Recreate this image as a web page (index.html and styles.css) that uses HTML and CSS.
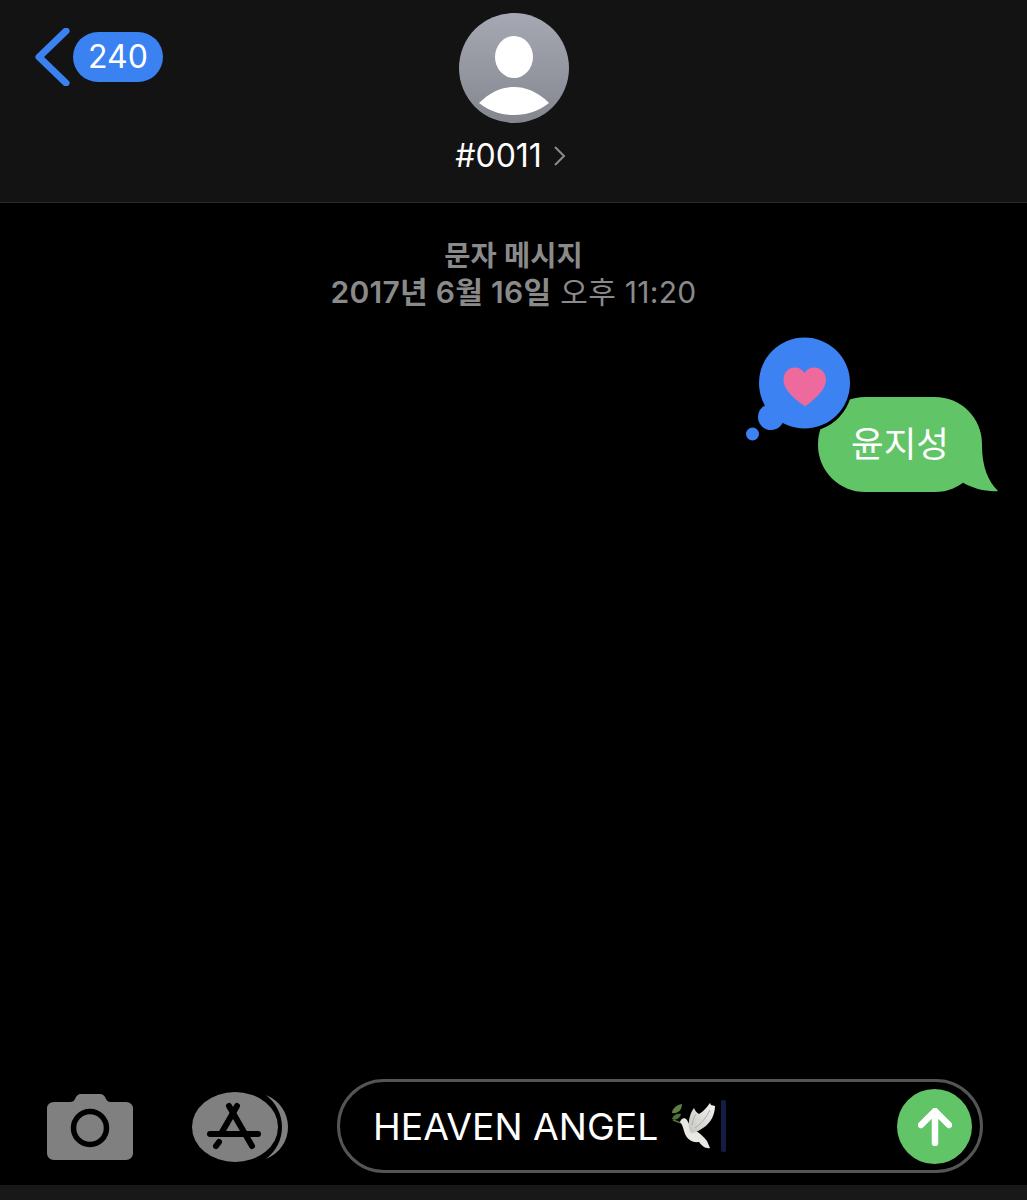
FILE: index.html
```html
<!DOCTYPE html>
<html>
  <head>
    <meta charset="UTF-8">
    <meta name="viewport" content="width=device-width, initial-scale=1.0">
    <title>#0011</title>
    <link rel="stylesheet" href="styles.css">
  </head>
  <body>
    <div class="screen">
      <header class="top-bar">
        <div class="back">
          <svg class="back-chevron" width="36" height="58" viewBox="0 0 36 58">
            <path d="M31 3 L4 29 L31 55" fill="none" stroke="#3a82f2" stroke-width="7" stroke-linecap="round" stroke-linejoin="round"/>
          </svg>
          <span class="back-count">240</span>
        </div>
        <div class="contact">
          <svg class="avatar" width="110" height="110" viewBox="0 0 110 110">
            <defs>
              <linearGradient id="avatar-fill" x1="0" y1="0" x2="0" y2="1">
                <stop offset="0" stop-color="#a6a9b3"/>
                <stop offset="1" stop-color="#84878e"/>
              </linearGradient>
            </defs>
            <circle cx="55" cy="55" r="55" fill="url(#avatar-fill)"/>
            <ellipse cx="55" cy="44" rx="19" ry="21" fill="#fff"/>
            <path d="M20 90 C32 78 44 74 55 74 C66 74 78 78 90 90 C80 98 68 102 55 102 C42 102 30 98 20 90 Z" fill="#fff"/>
          </svg>
          <div class="contact-name">
            <span>#0011</span>
            <svg width="13" height="22" viewBox="0 0 13 22">
              <path d="M2 2 L11 11 L2 20" fill="none" stroke="#8c8c8c" stroke-width="2"/>
            </svg>
          </div>
        </div>
      </header>

      <main class="thread">
        <div class="stamp">
          <div class="stamp-kind">문자 메시지</div>
          <div class="stamp-date"><b>2017년 6월 16일</b> 오후 11:20</div>
        </div>
        <div class="message">
          <svg class="tapback" width="108" height="108" viewBox="0 0 108 108">
            <circle cx="59.5" cy="47" r="48" fill="#000"/>
            <circle cx="59.5" cy="46" r="45.5" fill="#3d82f3"/>
            <circle cx="26" cy="80" r="13" fill="#3d82f3"/>
            <circle cx="7.5" cy="97" r="6.5" fill="#3d82f3"/>
            <path d="M59.5 69 C47 60 38.5 52 38.5 42.5 C38.5 35 44 30.5 50 30.5 C54 30.5 57.5 32.5 59.5 36 C61.5 32.5 65 30.5 69 30.5 C75 30.5 81 35 81 42.5 C81 52 72 60 62 68 C61 69 60 69 59.5 69 Z" fill="#ee6a9c"/>
          </svg>
          <div class="bubble">
            윤지성
            <svg class="bubble-tail" width="40" height="47" viewBox="0 0 40 47">
              <path d="M0 10 L24 0 C24 22 30 36 40 46 C30 47 15 44 4 37 Z" fill="#61c467"/>
            </svg>
          </div>
        </div>
      </main>

      <footer class="composer">
        <svg class="tool" width="86" height="66" viewBox="0 0 86 66">
          <path d="M7 8 H23 C26 8 27 7 28 5 C29 2 31 0 34 0 H53 C56 0 58 2 59 5 C60 7 61 8 64 8 H79 C83 8 86 11 86 14 V59 C86 63 83 66 79 66 H7 C3 66 0 63 0 59 V14 C0 11 3 8 7 8 Z" fill="#808080"/>
          <circle cx="43" cy="34" r="16.5" fill="none" stroke="#000" stroke-width="5.5"/>
        </svg>
        <svg class="tool tool-apps" width="98" height="72" viewBox="0 0 98 72">
          <path d="M74 4 C88 10 96 22 96 36 C96 50 88 62 74 68 C84 60 90 49 90 36 C90 23 84 12 74 4 Z" fill="#808080"/>
          <ellipse cx="43" cy="36" rx="43" ry="35" fill="#808080"/>
          <g fill="none" stroke="#000" stroke-width="6" stroke-linecap="round">
            <path d="M45 15 L30 41"/>
            <path d="M37 15 L60 55"/>
            <path d="M18 43 H66"/>
            <path d="M24 55 L27 51"/>
          </g>
        </svg>
        <div class="field">
          <span class="field-text">HEAVEN ANGEL</span>
          <svg class="dove" width="48" height="50" viewBox="0 0 48 50">
            <defs>
              <linearGradient id="dove-wing" x1="1" y1="0" x2="0" y2="1">
                <stop offset="0" stop-color="#f4f4f2"/>
                <stop offset="1" stop-color="#c4c4c1"/>
              </linearGradient>
            </defs>
            <!-- olive sprig -->
            <path d="M3 19 L11 22" stroke="#56723a" stroke-width="1.5"/>
            <path d="M2 12 C2 8 6 4 12 3 C12 8 9 13 2 12 Z" fill="#5f8040"/>
            <path d="M2 18 C3 14 7 12 11 13 C10 17 6 20 2 18 Z" fill="#4f6f36"/>
            <!-- body and tail -->
            <path d="M10 21 C11 17 15 16 17 19 C19 23 21 27 26 30 C31 33 34 36 37 40 L40 47 C36 48 32 45 29 41 C22 42 16 38 14 30 C13 26 12 23 10 21 Z" fill="#e8e8e5"/>
            <!-- wings -->
            <path d="M19 28 C18 20 20 12 24 7 C25 10 27 12 29 13 C33 11 37 6 40 2 L41 4 L45 5 C45 13 41 22 33 27 C29 30 24 32 21 32 Z" fill="url(#dove-wing)"/>
            <path d="M25 27 C31 23 36 17 40 9 M22 24 C23 19 24 16 26 13" fill="none" stroke="#aeaeaa" stroke-width="1"/>
          </svg>
          <span class="caret"></span>
          <button class="send" type="button">
            <svg width="34" height="38" viewBox="0 0 34 38">
              <path d="M3 17 L17 3 L31 17 M17 3 V35" fill="none" stroke="#fff" stroke-width="6.5" stroke-linecap="round" stroke-linejoin="round"/>
            </svg>
          </button>
        </div>
      </footer>
      <div class="keyboard-edge"></div>
    </div>
  </body>
</html>
```

FILE: styles.css
```css
* {
  margin: 0;
  padding: 0;
  box-sizing: border-box;
}

body {
  background: #000;
  font-family: Inter, "Noto Sans CJK KR", sans-serif;
  color: #fff;
}

.screen {
  height: 1200px;
  display: flex;
  flex-direction: column;
  overflow: hidden;
}

.top-bar {
  height: 203px;
  flex: none;
  display: grid;
  grid-template-columns: 1fr 110px 1fr;
  padding-top: 13px;
  background: #131313;
  border-bottom: 1px solid #2b2b2b;
}

.back {
  grid-column: 1;
  display: flex;
  align-items: center;
  align-self: start;
  gap: 2px;
  margin-top: 15px;
  padding-left: 35px;
}

.back-count {
  width: 90px;
  height: 50px;
  border-radius: 25px;
  background: #3a82f2;
  font-size: 32px;
  line-height: 50px;
  text-align: center;
}

.contact {
  grid-column: 2;
  display: flex;
  flex-direction: column;
  align-items: center;
}

.contact-name {
  display: flex;
  align-items: center;
  gap: 11px;
  margin-top: 14px;
  padding-right: 6px;
  font-size: 32px;
  line-height: 38px;
  white-space: nowrap;
}

.thread {
  flex: 1;
  display: flex;
  flex-direction: column;
}

.stamp {
  margin-top: 35px;
  text-align: center;
  line-height: 36px;
  color: #8a8a8a;
}

.stamp-kind {
  font-size: 28.5px;
  font-weight: 600;
}

.stamp-date {
  font-size: 30px;
  letter-spacing: 0.3px;
}

.stamp-date b {
  font-weight: 600;
}

.message {
  position: relative;
  align-self: flex-end;
  margin-top: 87px;
  margin-right: 45px;
}

.bubble {
  position: relative;
  width: 164px;
  height: 95px;
  border-radius: 47px;
  background: #61c467;
  font-size: 35.5px;
  line-height: 95px;
  text-align: center;
}

.bubble-tail {
  position: absolute;
  right: -16px;
  bottom: 0;
}

.tapback {
  position: absolute;
  z-index: 1;
  left: -73px;
  top: -60px;
}

.composer {
  flex: none;
  display: flex;
  align-items: center;
  padding: 0 44px 12px 47px;
}

.tool {
  flex: none;
  margin-top: 2px;
}

.tool-apps {
  margin-left: 59px;
}

.field {
  flex: 1;
  height: 94px;
  margin-left: 47px;
  padding: 0 8px 0 33px;
  display: flex;
  align-items: center;
  border: 3px solid #555;
  border-radius: 47px;
}

.field-text {
  font-size: 37.3px;
  white-space: nowrap;
}

.dove {
  margin-left: 12px;
}

.caret {
  width: 5px;
  height: 52px;
  margin-left: 3px;
  border-radius: 2px;
  background: #141e44;
}

.send {
  width: 75px;
  height: 75px;
  margin-left: auto;
  margin-top: 1px;
  display: flex;
  align-items: center;
  justify-content: center;
  border: none;
  border-radius: 50%;
  background: #61c467;
}

.keyboard-edge {
  height: 15px;
  flex: none;
  background: #181818;
}
```
